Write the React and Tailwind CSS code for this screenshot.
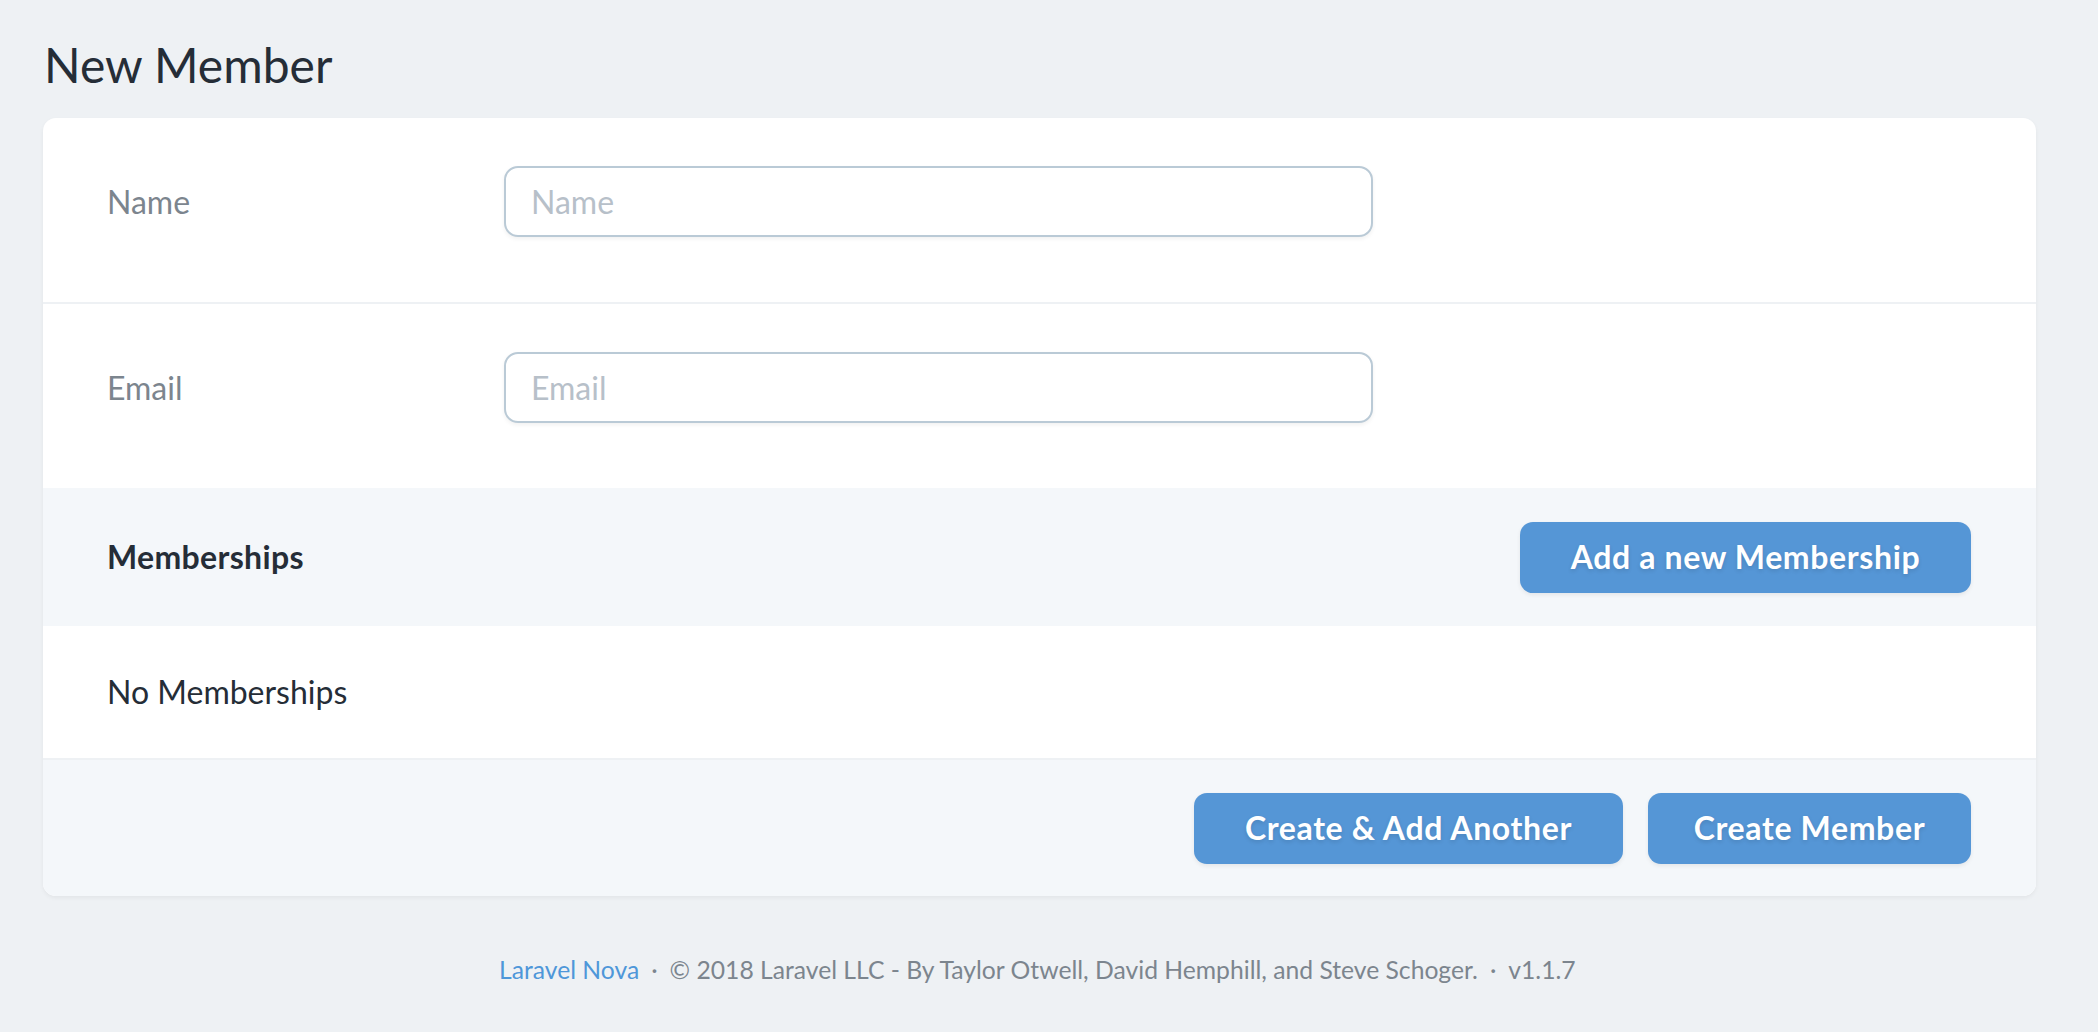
import React from "react";

const font = { fontFamily: "Lato, 'Noto Sans', sans-serif" };

function Field({ label, placeholder, border }) {
  return (
    <div
      className={
        "flex items-start h-[184px] pt-[48px] pl-[64px] " +
        (border ? "h-[186px] border-t-2 border-[#eef1f4]" : "")
      }
    >
      <label className="w-[397px] h-[71px] flex items-center text-[32px] text-[#7c858e]">
        {label}
      </label>
      <input
        type="text"
        placeholder={placeholder}
        className="w-[869px] h-[71px] px-[25px] rounded-[14px] border-2 border-[#bacad6] bg-white text-[32px] text-[#252d37] placeholder:text-[#b7c0c9] shadow-[0_2px_4px_rgba(0,0,0,0.06)] outline-none"
      />
    </div>
  );
}

function Button({ children, width }) {
  return (
    <button
      className={
        "h-[71px] rounded-[13px] bg-[#5596d6] text-white text-[32px] font-bold tracking-[0.02em] shadow-[0_2px_4px_rgba(0,0,0,0.07)] [text-shadow:0_2px_4px_rgba(0,0,0,0.12)] " +
        width
      }
    >
      {children}
    </button>
  );
}

export default function App() {
  return (
    <div className="min-h-[1032px] bg-[#eef1f4] pt-[36px] pl-[43px]" style={font}>
      <h1 className="h-[58px] leading-[58px] text-[48px] font-normal text-[#252d37] pl-[1px]">
        New Member
      </h1>

      <div className="mt-[24px] w-[1993px] bg-white rounded-[13px] overflow-hidden shadow-[0_2px_4px_rgba(0,0,0,0.05)]">
        <Field label="Name" placeholder="Name" />
        <Field label="Email" placeholder="Email" border />

        <div className="h-[138px] bg-[#f4f7fa] flex items-center justify-between pl-[64px] pr-[65px]">
          <h3 className="text-[32px] font-bold text-[#252d37] tracking-[0.01em]">Memberships</h3>
          <Button width="w-[451px]">Add a new Membership</Button>
        </div>

        <div className="h-[132px] flex items-center pl-[64px] text-[32px] text-[#252d37]">
          No Memberships
        </div>

        <div className="h-[138px] bg-[#f4f7fa] border-t-2 border-[#eef1f4] flex items-center justify-end gap-[25px] pr-[65px]">
          <Button width="w-[429px]">Create &amp; Add Another</Button>
          <Button width="w-[323px]">Create Member</Button>
        </div>
      </div>

      <p className="mt-[59px] w-[1993px] pl-[456px] leading-[30px] text-[24.7px] text-[#7c858e]">
        <a href="#" className="text-[#4e97d9]">
          Laravel Nova
        </a>
        <span className="px-[12px]">·</span>© 2018 Laravel LLC - By Taylor Otwell, David Hemphill, and Steve Schoger.
        <span className="px-[12px]">·</span>v1.1.7
      </p>
    </div>
  );
}
